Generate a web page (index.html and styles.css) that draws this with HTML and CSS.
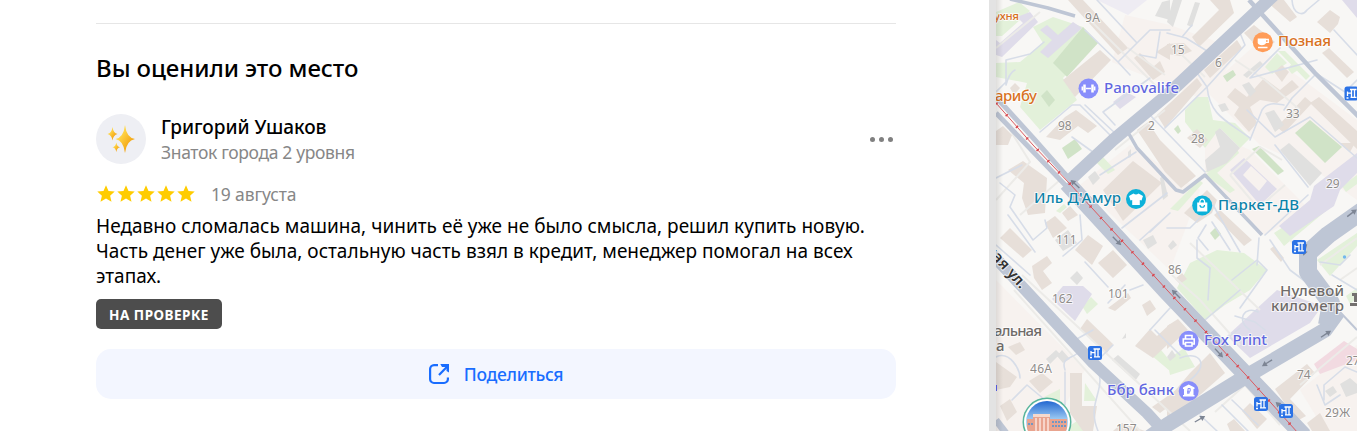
FILE: index.html
```html
<!DOCTYPE html>
<html lang="ru">

<head>
    <meta charset="UTF-8">
    <title>Отзывы</title>
    <link rel="stylesheet" href="styles.css">
</head>

<body>
    <main class="panel">
        <section class="review-section">
            <h2 class="section-title">Вы оценили это место</h2>
            <div class="author">
                <div class="avatar">
                    <svg width="28" height="28" viewBox="0 0 28 28">
                        <defs>
                            <linearGradient id="gold" x1="0" y1="0" x2="1" y2="1">
                                <stop offset="0.3" stop-color="#ffd84a" />
                                <stop offset="0.75" stop-color="#f3a312" />
                            </linearGradient>
                        </defs>
                        <g fill="url(#gold)">
                            <path d="M18 0 Q19.400 12.600 28 14 Q19.400 15.600 18 28 Q16.600 15.600 8.500 14 Q16.600 12.600 18 0Z" />
                            <path d="M5.500 2 Q6.300 8 10.500 9 Q6.300 10 5.500 15.500 Q4.700 10 .5 9 Q4.700 8 5.500 2Z" />
                            <path d="M9.300 17.500 Q9.900 21.500 13 22.300 Q9.900 23 9.300 27 Q8.700 23 5.500 22.300 Q8.700 21.500 9.300 17.500Z" />
                        </g>
                    </svg>
                </div>
                <div class="author-info">
                    <div class="author-name">Григорий Ушаков</div>
                    <div class="author-level">Знаток города 2 уровня</div>
                </div>
                <button class="more-btn" aria-label="Ещё">
                    <span class="dot"></span><span class="dot"></span><span class="dot"></span>
                </button>
            </div>
            <div class="rating">
                <svg class="stars" width="100" height="20" viewBox="0 0 100 20">
                    <defs>
                        <path id="star" d="M10 1.300 12.500 6.900 18.700 7.600 14.100 11.700 15.500 17.800 10 14.600 4.500 17.800 5.900 11.700 1.300 7.600 7.500 6.900Z" />
                    </defs>
                    <use href="#star" />
                    <use href="#star" x="20" />
                    <use href="#star" x="40" />
                    <use href="#star" x="60" />
                    <use href="#star" x="80" />
                </svg>
                <span class="date">19 августа</span>
            </div>
            <p class="review-text">Недавно сломалась машина, чинить её уже не было смысла, решил купить новую.<br>Часть денег уже была, остальную часть взял в кредит, менеджер помогал на всех<br>этапах.</p>
            <div class="status">НА ПРОВЕРКЕ</div>
            <button class="share-btn">
                <svg width="24" height="24" viewBox="0 0 24 24" fill="none" stroke="#196dff" stroke-width="2.200">
                    <path d="M11 3.100H7a4 4 0 0 0-3.900 4v10a4 4 0 0 0 3.900 3.900h10a4 4 0 0 0 3.900-3.900V15.500" />
                    <path d="M12 13 20.500 4.300" />
                    <path d="M13.300 2H22V10.500L19.500 9V5H15Z" fill="#196dff" stroke="none" />
                </svg>
                <span class="share-label">Поделиться</span>
            </button>
        </section>
    </main>

    <div class="gutter"></div>

    <aside class="map">
        <svg width="361" height="431" viewBox="996 0 361 431">
            <defs>
                <g id="station">
                    <rect x="-7" y="-7" width="14" height="14" rx="2.500" fill="#2b72e6" />
                    <path d="M-1.500-4H5M3-4V3.500M0-4V3.500M-1 3.800H5M-4-2V2.500M-4-.3H0M-5 4.500H-3" stroke="#fff" stroke-width="1.300" fill="none" />
                </g>
                <path id="arrow" d="M-6-.7H1V-3L6 0 1 3V.7H-6Z" fill="#7d8594" />
                <linearGradient id="sky" x1="0" y1="0" x2="0" y2="1">
                    <stop offset="0" stop-color="#1c62cf" />
                    <stop offset="0.5" stop-color="#a8d4f6" />
                </linearGradient>
                <linearGradient id="edge" x1="0" y1="0" x2="1" y2="0">
                    <stop offset="0" stop-color="#000" stop-opacity="0.1" />
                    <stop offset="1" stop-color="#000" stop-opacity="0" />
                </linearGradient>
                <clipPath id="photo">
                    <circle cx="1047" cy="422" r="21" />
                </clipPath>
            </defs>

            <rect class="land" x="996" y="0" width="361" height="431" />

            <!-- дворы -->
            <g class="yard">
                <path d="M1125 15 1170 25 1240 50 1205 100 1130 70 1112 62Z" />
                <path d="M1205 90 1255 45 1310 85 1357 120V200L1315 170 1260 145Z" />
                <path d="M996 280 1085 370 1050 431H996Z" />
                <path d="M1080 185 1130 145 1200 190 1170 270Z" />
                <path d="M1300 390 1357 345V431H1325Z" />
                <path d="M1205 130 1250 150 1310 210 1265 235 1205 175Z" />
            </g>

            <!-- зелень -->
            <g class="green">
                <path d="M996 63 1020 62 1043 43 1033 27 1053 17 1083 27 1098 43 1063 78 1077 100 1040 130 1020 107 1027 83 996 77Z" />
                <path d="M996 12 1019 2 1030 11 1002 36 996 36Z" />
                <path d="M1185 110 1197 97H1208L1213 120 1235 123 1250 138 1240 148 1220 128 1205 148 1185 122Z" />
                <path d="M1265 67 1277 53 1287 63 1272 74ZM1288 69 1292 63 1298 70 1292 74ZM1278 51 1285 51 1310 76 1306 80Z" />
                <path d="M1205 172 1234 143 1239 153 1217 173ZM1205 175 1213 169 1235 190 1230 193Z" />
                <path d="M1170 209 1199 180 1203 183 1178 211Z" />
                <path d="M1177 288 1190 263 1217 250 1244 253 1267 270 1250 290 1225 305 1205 320Z" />
                <path d="M1274 233 1320 203 1327 210 1284 246ZM1317 260 1357 233V246L1330 276ZM1342 186 1357 175V184L1346 192Z" />
                <path d="M1082 306 1091 297 1098 304 1087 314ZM1085 383 1097 401H1084ZM1044 397 1060 389V404ZM1068 427 1077 421 1090 431H1068Z" />
                <path d="M1145 350 1157 345 1170 361V371ZM1167 360 1184 348 1195 367 1170 375Z" />
                <path d="M1096 162 1103 157 1115 170 1108 174ZM1056 211 1064 204 1067 207 1060 213Z" />
                <path d="M1346 296 1357 288V298L1350 304Z" />
            </g>
            <g class="park">
                <path d="M1083 27 1098 43 1067 77 1053 63Z" />
                <path d="M1041 96 1047 90 1055 100 1049 107Z" />
                <path d="M1062 148 1075 139 1082 149 1068 159Z" />
                <path d="M1223 76 1233 70 1236 75 1227 82ZM1174 129 1178 125 1181 131 1178 134Z" />
                <path d="M1295 133 1310 120 1342 147 1325 163Z" />
                <path d="M1252 149 1259 146 1284 171 1278 175Z" />
                <path d="M1210 233 1216 227 1221 234 1215 240Z" />
            </g>

            <!-- общественные здания -->
            <g class="public">
                <path d="M1040 30 1047 25 1058 35 1073 22 1082 28 1048 58 1040 52 1052 40Z" />
                <path d="M996 40 1000 43 1023 23 1017 17 1030 12 1038 22 1002 57 996 55Z" />
                <path fill-rule="evenodd" d="M1230 170 1244 158 1277 189 1260 205ZM1243 175 1251 166 1267 181 1259 191Z" />
                <path d="M1314 186 1357 153V173L1340 190 1334 206 1290 236 1279 226 1310 200Z" />
                <path d="M1052 299 1063 286H1083L1092 294 1075 321Z" />
                <path d="M1227 336 1277 290 1322 306 1310 323 1250 358Z" />
                <path d="M1113 102 1126 92 1136 97 1120 109Z" />
                <path d="M1342 0H1357V18Z" />
            </g>
            <path class="hospital" d="M1314 364 1344 341 1357 349V360L1320 374Z" />
            <path d="M1097 0H1147L1128 15Z" fill="#eeecf3" />

            <!-- жилые дома -->
            <g class="house">
                <path d="M1100 50 1111 60 1075 97 1063 80Z" />
                <path d="M1068 0H1083L1128 48 1118 55Z" />
                <path d="M1140 53 1153 67 1160 61 1165 72 1153 80 1134 58ZM1156 52 1170 43V60Z" />
                <path d="M1046 137 1065 117 1076 110 1097 126 1088 133 1078 126 1060 140Z" />
                <path d="M1010 88 1015 83 1020 88 1014 95Z" />
                <path d="M996 131 1003 126 1012 135 1008 145H996Z" />
                <path d="M1210 0H1230L1234 13 1199 47 1192 37 1219 10Z" />
                <path d="M1237 40 1242 48 1210 78 1204 70Z" />
                <path d="M1167 44 1184 43 1192 51 1180 56 1167 54ZM1157 115 1197 78 1202 85 1165 128Z" />
                <path d="M1137 130 1148 122 1160 140 1196 176 1181 188 1165 172Z" />
                <path d="M1244 33 1254 25 1275 42 1262 52Z" />
                <path d="M1265 0H1284L1297 17 1290 22ZM1317 22 1330 10 1340 17 1338 24 1330 33Z" />
                <path d="M1322 53 1329 48 1354 72 1347 78Z" />
                <path d="M1227 97 1235 88 1247 97 1264 78 1280 90 1292 80 1299 87 1277 103 1260 100 1250 107 1257 123 1249 132 1234 115 1239 107Z" />
                <path d="M1274 72 1282 65 1289 72 1282 82Z" />
                <path d="M1277 127 1305 97 1312 103 1284 133ZM1310 103 1319 97 1357 131V149Z" />
                <path d="M1187 138 1197 129 1208 140 1200 148Z" />
                <path d="M1008 170 1023 161 1047 178 1045 213 1028 215 1022 198 1024 183Z" />
                <path d="M1103 190 1133 161 1162 183 1123 221Z" />
                <path d="M1045 223 1055 216 1067 228 1053 238ZM1062 213 1070 206 1078 215 1068 221Z" />
                <path d="M1075 250 1088 235 1103 246 1092 265ZM1098 263 1113 250 1127 265 1113 278Z" />
                <path d="M1000 238 1010 228 1032 250 1023 258Z" />
                <path d="M1032 266 1047 256 1052 263 1043 271 1052 283 1042 290 1034 278Z" />
                <path d="M1355 143H1340L1350 152Z" />
                <path d="M1184 213 1207 190 1217 200 1212 213 1197 223ZM1214 215 1220 210 1252 240 1244 246Z" />
                <path d="M1270 249 1274 246 1284 258 1281 262ZM1175 279 1182 273 1187 279 1180 284Z" />
                <path d="M1080 329 1087 319 1113 344 1107 353Z" />
                <path d="M1135 346 1150 329 1157 336 1170 324 1180 333 1153 358Z" />
                <path d="M1070 373H1082V406H1097L1093 431H1083L1070 413Z" />
                <path d="M1029 381 1042 373 1053 382 1040 393ZM996 362 1017 377 1010 387 996 390Z" />
                <path d="M1000 406 1010 399 1017 412 1007 421ZM1008 347 1020 342 1025 350 1016 355Z" />
                <path d="M1142 305 1150 300 1156 309 1147 316ZM1108 308 1128 293 1131 298 1115 311Z" />
                <path d="M1152 407 1175 391 1180 398 1160 413ZM1113 431 1122 423 1145 431Z" />
                <path d="M1167 326 1178 319 1188 330 1167 349ZM1190 373 1210 353 1225 373 1184 409 1167 417V400Z" />
                <path d="M1275 389 1307 364 1315 373 1290 399 1306 416 1297 421Z" />
                <path d="M1242 411 1250 403 1267 419 1257 429ZM1227 424 1234 419 1245 431H1230Z" />
                <path d="M1307 423 1320 413 1330 431H1312Z" />
            </g>
            <g class="shed">
                <path d="M1167 22 1173 0H1182L1173 27ZM1187 25 1195 2 1200 3 1192 27Z" />
                <path d="M1155 16 1162 2 1170 0V20L1163 18Z" />
                <path d="M1265 113 1274 110 1284 125 1275 132ZM1242 85 1249 82 1256 91 1250 97ZM1243 75 1260 61 1263 64 1247 78Z" />
                <path d="M1205 160 1220 147 1215 132 1220 128 1240 148 1227 163 1207 172ZM1218 105 1225 103 1229 110 1222 112Z" />
                <path d="M1280 150 1289 143 1322 173 1310 186Z" />
                <path d="M1088 177 1095 171 1100 178 1093 185ZM1055 240 1068 230 1077 243 1063 251ZM1070 278 1077 271 1083 278 1077 285Z" />
                <path d="M1143 240 1153 235 1157 243 1148 249ZM1160 178 1163 176 1168 196 1163 200ZM1128 152 1131 149V157L1128 158Z" />
                <path d="M1062 350 1070 359 1063 363 1057 356ZM1046 359 1056 350 1060 354 1050 364Z" />
                <path d="M1112 360 1118 355 1140 374 1135 381ZM1122 339 1126 333V338Z" />
                <path d="M1167 357 1172 350 1176 356 1170 361ZM1168 246 1173 240 1177 245 1171 250Z" />
                <path d="M1325 391 1333 386 1337 392 1330 397ZM1340 384 1350 378 1357 384V393L1346 397Z" />
            </g>

            <!-- проезды -->
            <g class="lane-wide">
                <path d="M996 48 1040 12M1085 15 1170 100M1128 48 1165 75M1115 150 1165 110M1010 130 1030 162 996 200M1020 215 1060 180" />
                <path d="M1182 55 1205 77M1235 60 1265 80 1300 110M1230 175 1260 147 1282 160M1230 175 1258 208 1285 185" />
                <path d="M1022 275 1190 431M1014 290 1140 431M1080 195 1160 275M1268 365 1330 320" />
                <path d="M1215 412 1245 385 1280 425M1300 385 1357 337M1172 275 1200 300 1240 345" />
                <path d="M1190 243 1260 310M1290 240 1325 285M1320 265 1357 238M1340 280 1357 268" />
            </g>
            <g class="lane">
                <path d="M1097 0 1137 43 1118 62 1085 30M1150 30 1137 43M1118 62 1130 75M1150 30H1170M1160 32 1156 58 1140 55" />
                <path d="M1006 85V60L1030 54 1044 42M996 92 1006 82M1015 70C1010 72 1008 78 1006 85" />
                <path d="M1040 132 1072 105H1080L1113 138M1085 105 1117 135M1103 112 1115 125M1103 112 1150 78M1072 137 1097 155" />
                <path d="M1167 33 1186 38 1207 51M1192 25 1182 37M1240 33 1245 45 1207 87 1195 70M1207 87C1210 115 1225 120 1250 138" />
                <path d="M1292 0C1293 15 1303 16 1307 10L1319 0M1317 60 1250 78 1280 48M1334 30 1357 55M1316 74 1292 98 1284 110M1317 74 1345 92 1357 80" />
                <path d="M1250 140 1262 110C1268 100 1280 105 1284 105M1247 110 1275 137 1310 117 1357 158M1150 115 1205 172M1165 128 1207 87M1100 175 1136 152" />
                <path d="M996 178 1022 165M1000 183 1015 195 1010 207 1033 240 1047 228 1045 220M1008 215 1035 252M996 245 1030 275" />
                <path d="M1080 215 1082 240 1063 256M1085 262 1108 287M1122 228 1167 193M1140 240 1170 213 1150 232M1130 290 1143 285M1150 330 1170 308" />
                <path d="M1167 228 1190 228 1213 205 1240 252M1230 250 1212 222M1208 250 1198 238 1206 225M1197 240 1197 258 1210 268 1208 300M1240 308 1267 270 1257 260 1232 280M1259 238 1257 265" />
                <path d="M1265 235 1308 195M1275 145 1308 187M1270 240 1290 270 1310 285M1320 262 1340 265 1350 255M1332 275 1357 290" />
                <path d="M1113 345 1098 360M1065 370C1060 355 1075 360 1080 350M1065 372 1065 405M1095 363C1110 390 1085 400 1098 431M1012 400 1027 385 1045 400M996 357C1010 350 1020 370 1020 378" />
                <path d="M1093 330 1075 340M1108 303 1125 285M1155 330 1180 355M1205 320 1240 290M1180 358C1200 350 1210 365 1190 380" />
                <path d="M1250 330C1235 320 1245 305 1258 312M1235 316 1255 322 1265 330M1225 340 1240 328M1324 400V385L1345 367 1357 372M1317 385 1325 405 1340 395" />
                <path d="M1232 400 1258 425M1267 395 1300 431M1222 405 1248 431M1200 415 1217 431" />
            </g>

            <!-- улицы -->
            <g class="street">
                <path stroke-width="3.500" d="M1010 -1 1048 8 1075 16" />
                <path stroke-width="5" d="M996 113 1070 190M996 97 1035 140 1072 182" />
                <path stroke-width="12.500" d="M1274 -5 1167 95 1113 140 1070 180" />
                <path stroke-width="17" d="M1067 183 1167 292 1252 381 1304 436" />
                <path stroke-width="11.500" d="M990 252 1093 363 1147 413 1168 436" />
                <path stroke-width="15" d="M1150 437 1167 425 1250 374 1325 330 1338 312" />
                <path stroke-width="18" d="M1362 211 1328 235 1308 253 1308 272 1331 303 1327 325" />
                <path stroke-width="4.500" d="M1249 0 1315 73 1362 120" />
                <path stroke-width="3.500" d="M1129 134 1137 148 1176 190 1183 192 1205 175 1262 235" />
                <path stroke-width="2" d="M1340 312 1357 330" />
            </g>
            <path class="street" stroke-width="7" d="M996 420 1008 436" />

            <g>
                <use href="#arrow" transform="translate(1075 184) rotate(-137)" />
                <use href="#arrow" transform="translate(1117 241) rotate(45)" />
                <use href="#arrow" transform="translate(1176 294) rotate(-135)" />
                <use href="#arrow" transform="translate(1219 353) rotate(47)" />
                <use href="#arrow" transform="translate(1267 363) rotate(148)" />
                <use href="#arrow" transform="translate(1326 334) rotate(-33)" />
                <use href="#arrow" transform="translate(1200 419) rotate(-30)" />
                <use href="#arrow" transform="translate(1280 406) rotate(-137)" />
                <use href="#arrow" transform="translate(1305 250) rotate(105)" />
                <use href="#arrow" transform="translate(1352 213) rotate(-37)" />
            </g>

            <!-- трамвай -->
            <path class="tram" d="M996 103 1033 145 1070 184 1167 290 1245 374 1298 433" />
            <path class="tram-marks" d="M996 103 1033 145 1070 184 1167 290 1245 374 1298 433" />

            <!-- номера домов -->
            <g class="num">
                <text x="1085" y="22" textLength="15">9А</text>
                <text x="1058" y="130">98</text>
                <text x="1148" y="130">2</text>
                <text x="1171" y="54">15</text>
                <text x="1215" y="67">6</text>
                <text x="1286" y="118">33</text>
                <text x="1191" y="143">28</text>
                <text x="1326" y="188">29</text>
                <text x="1056" y="244">111</text>
                <text x="1168" y="274">86</text>
                <text x="1052" y="303">162</text>
                <text x="1108" y="298">101</text>
                <text x="1030" y="373" textLength="22">46А</text>
                <text x="1116" y="433">157</text>
                <text x="1297" y="379">74</text>
                <text x="1346" y="365">27</text>
                <text x="1325" y="417" textLength="25">29Ж</text>
            </g>

            <!-- подписи -->
            <g class="label">
                <text class="food" x="994" y="20" textLength="25" font-size="11.500">ухня</text>
                <text class="food" x="995" y="101" textLength="42">арибу</text>
                <text class="food" x="1278" y="46" textLength="53">Позная</text>
                <text class="service" x="1104" y="93" textLength="75">Panovalife</text>
                <text class="service" x="1204" y="345" textLength="63">Fox Print</text>
                <text class="service" x="1107" y="395" textLength="67">Ббр банк</text>
                <text class="shop" x="1034" y="203" textLength="87">Иль Д'Амур</text>
                <text class="shop" x="1218" y="210" textLength="81">Паркет-ДВ</text>
                <text class="sight" x="1280" y="296" textLength="64">Нулевой</text>
                <text class="sight" x="1271" y="311" textLength="73">километр</text>
                <text class="sight" x="994" y="336" textLength="48">альная</text>
                <text class="sight" x="996" y="351">а</text>
                <text class="road" transform="translate(985 250) rotate(48)" textLength="53">ная ул.</text>
            </g>

            <!-- метки -->
            <circle cx="1088.500" cy="88.500" r="10" fill="#888efb" />
            <path d="M1084.500 84.500V92.500M1092.500 84.500V92.500" stroke="#fff" stroke-width="2.500" />
            <path d="M1082.300 86.500V90.500M1094.700 86.500V90.500M1086 88.500H1091" stroke="#fff" stroke-width="1.500" />

            <circle cx="1262.800" cy="42.200" r="10" fill="#ff9c58" />
            <path d="M1257.700 38.500H1266V42.500C1266 46 1257.700 46 1257.700 42.500Z" fill="#fff" />
            <path d="M1266 39.500H1268.300V42.300H1265.500M1258 47.500H1267.500" fill="none" stroke="#fff" stroke-width="1.300" />

            <circle cx="1136" cy="199" r="10" fill="#0cb1d9" />
            <path d="M1133.500 193.500 Q1136 195.500 1138.500 193.500L1143 196 1141.500 200.500 1139.800 200V205H1132.200V200L1130.500 200.500 1129 196Z" fill="#fff" />

            <circle cx="1202.200" cy="205.500" r="10" fill="#0cb1d9" />
            <path d="M1197.200 202.500H1207.300V211.500H1197.200Z" fill="#fff" />
            <path d="M1199.800 203C1199.800 197.800 1204.700 197.800 1204.700 203" fill="none" stroke="#fff" stroke-width="1.300" />
            <path d="M1200 205C1200 208 1204.500 208 1204.500 205" fill="none" stroke="#0cb1d9" stroke-width="1.200" />

            <circle cx="1188.700" cy="340.800" r="10" fill="#888efb" />
            <path d="M1185.500 339V335.500H1192V339M1185.500 344H1183.300V339H1194.200V344H1192M1185.500 342.500H1192V346H1185.500Z" fill="none" stroke="#fff" stroke-width="1.600" />

            <circle cx="1188.700" cy="391" r="10" fill="#888efb" />
            <path d="M1183 387.500 1188.700 384.500 1194.500 387.500V389H1193.500V395H1194.500V396.500H1183V395H1184V389H1183Z" fill="#fff" />
            <path d="M1188 394V388.500H1190.200V391.300H1187M1187 392.800H1190" fill="none" stroke="#888efb" stroke-width="1" />

            <use href="#station" x="1095" y="353" />
            <use href="#station" x="1299" y="247" />
            <use href="#station" x="1351.500" y="93.500" />
            <use href="#station" x="1261" y="404" />
            <use href="#station" x="1286" y="411" />

            <path d="M1350 306H1357V303H1350ZM1352 293H1357V302H1354V296H1352Z" fill="#73706f" />
            <rect x="995" y="385" width="2" height="6" fill="#5b62f0" />
            <circle cx="1344.500" cy="257" r="1.700" fill="#72b8ed" />

            <circle cx="1047" cy="422" r="24.500" fill="#59b59c" />
            <circle cx="1047" cy="422" r="23" fill="#fff" />
            <g clip-path="url(#photo)">
                <rect x="1026" y="400" width="42" height="42" fill="url(#sky)" />
                <path d="M1027 419H1033V414H1050V419H1067V431H1027Z" fill="#e9a48f" />
                <path d="M1033 414H1050V417H1033Z" fill="#f6d9cd" />
                <path d="M1036 418V431M1040 418V431M1044 418V431M1048 418V431" stroke="#fbe5dc" stroke-width="1.500" />
                <path d="M1052 422H1066M1052 426H1066M1028 424H1033" stroke="#7197c4" stroke-width="2" stroke-dasharray="2 1" />
            </g>

            <rect x="996" y="0" width="7" height="431" fill="url(#edge)" />
        </svg>
    </aside>
</body>

</html>
```
FILE: styles.css
```css
* {
    box-sizing: border-box;
}

body {
    margin: 0;
    display: flex;
    height: 431px;
    overflow: hidden;
    background: #fff;
    color: #000;
    font-family: "Noto Sans", sans-serif;
}

.panel {
    width: 989px;
    padding: 23px 93px 0 96px;
}

.review-section {
    border-top: 1px solid #e6e6e6;
    padding-top: 28px;
}

.section-title {
    margin: 0;
    font-size: 24px;
    line-height: 32px;
    font-weight: 500;
    letter-spacing: -0.07px;
    white-space: nowrap;
}

.author {
    display: flex;
    align-items: center;
    height: 50px;
    margin-top: 30px;
}

.avatar {
    display: flex;
    align-items: center;
    justify-content: center;
    width: 50px;
    height: 50px;
    border-radius: 50%;
    background: #eeeff4;
}

.author-info {
    flex: 1;
    margin-left: 15px;
    white-space: nowrap;
}

.author-name {
    font-size: 19px;
    line-height: 26px;
    font-weight: 500;
    letter-spacing: -0.05px;
}

.author-level {
    font-size: 17.5px;
    line-height: 25px;
    color: #878787;
    letter-spacing: -0.35px;
}

.more-btn {
    display: flex;
    gap: 4px;
    padding: 0 3px 0 4px;
    border: none;
    background: none;
}

.dot {
    width: 5px;
    height: 5px;
    border-radius: 50%;
    background: #808080;
}

.rating {
    display: flex;
    align-items: center;
    height: 24px;
    margin-top: 18px;
}

.stars {
    fill: #ffcc00;
}

.date {
    margin-left: 15px;
    font-size: 17.5px;
    color: #878787;
    letter-spacing: -0.15px;
}

.review-text {
    margin: 8px 0 0;
    font-size: 19px;
    line-height: 25px;
    letter-spacing: 0.02px;
    white-space: nowrap;
}

.status {
    display: flex;
    align-items: center;
    justify-content: center;
    width: 126px;
    height: 30px;
    margin-top: 10px;
    padding-top: 2px;
    border-radius: 5px;
    background: #4d4d4d;
    color: #fff;
    font-size: 13.5px;
    font-weight: 700;
    letter-spacing: 0.5px;
    white-space: nowrap;
}

.share-btn {
    display: flex;
    align-items: center;
    justify-content: center;
    gap: 13px;
    width: 100%;
    height: 50px;
    margin-top: 20px;
    padding: 0 8px 0 6px;
    border: none;
    border-radius: 15px;
    background: #f3f6ff;
    color: #196dff;
    font-family: inherit;
    font-size: 17.5px;
    font-weight: 500;
}

.share-label {
    letter-spacing: -0.3px;
}

.gutter {
    width: 7px;
    background: #e3e3e3;
}

.map {
    width: 361px;
}

.map svg {
    display: block;
}

.land {
    fill: #f8f7f5;
}

.yard {
    fill: #f7f2ef;
}

.green {
    fill: #e3f1da;
}

.park {
    fill: #d0e3c7;
}

.public {
    fill: #dfdcea;
}

.hospital {
    fill: #f2dae1;
}

.house {
    fill: #e7dfd9;
}

.shed {
    fill: #e0e0df;
}

.lane-wide {
    fill: none;
    stroke: #ecebe8;
    stroke-width: 2;
}

.lane {
    fill: none;
    stroke: #d7dde8;
    stroke-width: 1.6;
    stroke-linejoin: round;
    stroke-linecap: round;
}

.street {
    fill: none;
    stroke: #bec6d5;
    stroke-linejoin: round;
}

.tram {
    fill: none;
    stroke: #dc5a60;
    stroke-width: 1;
}

.tram-marks {
    fill: none;
    stroke: #d9474f;
    stroke-width: 3;
    stroke-dasharray: 1.5 14;
}

.num {
    font-size: 12px;
    fill: #8f8c8a;
}

.num text,
.label text {
    stroke: rgba(255, 255, 255, 0.75);
    stroke-width: 2px;
    paint-order: stroke;
    stroke-linejoin: round;
}

.label {
    font-size: 15px;
    font-weight: 500;
}

.food {
    fill: #d9711f;
}

.service {
    fill: #6167e0;
}

.shop {
    fill: #0c83aa;
}

.sight {
    fill: #6f6b69;
}

.road {
    fill: #333;
    font-weight: 600;
}
```
